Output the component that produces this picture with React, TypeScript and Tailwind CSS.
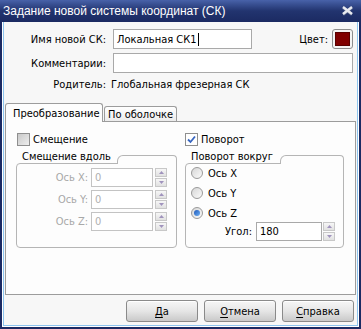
import React from 'react';

const ui = "font-['DejaVu_Sans_Condensed','Liberation_Sans',sans-serif] text-[11px] leading-none";

function TextBox({
  value,
  className,
  disabled,
  caret,
}: {
  value?: string;
  className?: string;
  disabled?: boolean;
  caret?: boolean;
}) {
  return (
    <div
      className={`flex items-center bg-white border px-[3px] ${
        disabled ? 'border-[#c3c3c3] text-[#b0b0b0]' : 'border-[#a9a9a9] text-black'
      } ${className ?? ''}`}
    >
      {value}
      {caret && <span className="ml-px w-px h-[13px] bg-black" />}
    </div>
  );
}

function Spinner() {
  return (
    <div className="flex flex-col gap-px w-[12px] h-[19px]">
      <div className="flex-1 flex items-center justify-center border border-[#c8c8c8] bg-gradient-to-b from-[#f7f7f7] to-[#e1e1e1]">
        <svg width="5" height="3" viewBox="0 0 5 3">
          <path d="M0 3 2.5 0 5 3Z" fill="#a093bd" />
        </svg>
      </div>
      <div className="flex-1 flex items-center justify-center border border-[#c8c8c8] bg-gradient-to-b from-[#f7f7f7] to-[#e1e1e1]">
        <svg width="5" height="3" viewBox="0 0 5 3">
          <path d="M0 0 2.5 3 5 0Z" fill="#a093bd" />
        </svg>
      </div>
    </div>
  );
}

function CheckBox({ checked, label }: { checked?: boolean; label: string }) {
  return (
    <div className="flex items-center h-[13px]">
      <div
        className={`w-[13px] h-[13px] border border-[#8f8f8f] flex items-center justify-center ${
          checked ? 'bg-white' : 'bg-gradient-to-br from-[#c9c9c9] to-[#eeeeee]'
        }`}
      >
        {checked && (
          <svg width="9" height="9" viewBox="0 0 9 9">
            <path d="M1 4.5 3.5 7 8 1.5" fill="none" stroke="#3765c0" strokeWidth="1.8" />
          </svg>
        )}
      </div>
      <span className="ml-[3px]">{label}</span>
    </div>
  );
}

function Radio({ checked, label }: { checked?: boolean; label: string }) {
  return (
    <div className="flex items-center h-[16px]">
      <div className="w-[12px] h-[12px] rounded-full border border-[#9a9a9a] bg-gradient-to-br from-[#d6d6d6] to-[#fbfbfb] flex items-center justify-center">
        {checked && (
          <div className="w-[6px] h-[6px] rounded-full bg-gradient-to-br from-[#1d57b8] to-[#6eb0f5]" />
        )}
      </div>
      <span className="ml-[5px]">{label}</span>
    </div>
  );
}

function GroupBox({
  title,
  titleWidth,
  width,
  children,
}: {
  title: string;
  titleWidth: string;
  width: string;
  children: React.ReactNode;
}) {
  return (
    <div className={`flex flex-col ${width}`}>
      <div className="flex items-end h-[12px]">
        <span className={`${titleWidth} h-[12px] leading-[12px] pl-[6px]`}>{title}</span>
        <div className="flex-1 h-[9px] -mb-px relative z-10 border-t border-x border-[#b5b5b5] rounded-tl-[6px] rounded-tr-[4px] bg-[#fdfdfd]" />
      </div>
      <div className="h-[85px] border border-[#b5b5b5] rounded-[4px] rounded-tr-none">{children}</div>
    </div>
  );
}

function DlgButton({ hot, rest }: { hot: string; rest: string }) {
  return (
    <div className="w-[72px] h-[22px] rounded-[3px] border border-[#8a8a8a] bg-gradient-to-b from-[#f6f6f6] via-[#e6e6e6] to-[#c9c9c9] flex items-center justify-center shadow-[inset_0_1px_0_#ffffff]">
      <span>
        <span className="underline underline-offset-2">{hot}</span>
        {rest}
      </span>
    </div>
  );
}

export default function App() {
  return (
    <div className={`${ui} w-[361px] h-[329px] bg-[#1b2a63] flex flex-col`}>
      <div className="h-[22px] flex items-center justify-between pl-[3px] pr-[7px] bg-gradient-to-b from-[#4862a9] via-[#22346f] to-[#1b2a62]">
        <span className="text-white text-[12px] font-['Liberation_Sans',sans-serif]">
          Задание новой системы координат (СК)
        </span>
        <svg width="13" height="10" viewBox="0 0 13 10">
          <path d="M2 1.5 11 8.5M11 1.5 2 8.5" stroke="#5a6789" strokeWidth="3" />
          <path d="M2 1 11 8M11 1 2 8" stroke="#e8eaf0" strokeWidth="2.4" />
        </svg>
      </div>

      <div className="flex-1 flex flex-col px-[2px] pb-[2px]">
        <div className="flex-1 flex flex-col border-x border-b border-white">
          <div className="flex-1 flex flex-col border-x border-b border-[#8cc4ef] bg-[#f7f7f7] px-px">
            {/* name row */}
            <div className="mt-[7px] flex items-center h-[20px]">
              <span className="w-[101px] text-right">Имя новой СК:</span>
              <TextBox value="Локальная СК1" caret className="ml-[7px] w-[139px] h-[20px]" />
              <span className="ml-auto">Цвет:</span>
              <div className="ml-[4px] mr-[3px] w-[21px] h-[20px] rounded-[3px] border border-[#8d8d8d] bg-[#f4f4f4] p-[2px]">
                <div className="w-full h-full bg-[#800000] border border-[#5a0000]" />
              </div>
            </div>

            {/* comments row */}
            <div className="mt-[4px] flex items-center h-[20px]">
              <span className="w-[101px] text-right">Комментарии:</span>
              <TextBox className="ml-[7px] w-[240px] h-[20px]" />
            </div>

            {/* parent row */}
            <div className="mt-[4px] flex items-center h-[14px]">
              <span className="w-[101px] text-right">Родитель:</span>
              <span className="ml-[5px]">Глобальная фрезерная СК</span>
            </div>

            {/* tabs */}
            <div className="mt-[12px] flex items-end h-[18px]">
              <div className="relative z-10 -mb-px w-[98px] h-[19px] border-t border-x border-[#9c9c9c] rounded-t-[3px] bg-[#fdfdfd] flex items-center pl-[7px]">
                Преобразование
              </div>
              <div className="ml-px w-[73px] h-[15px] border-t border-x border-[#9c9c9c] rounded-t-[3px] bg-gradient-to-b from-[#ffffff] to-[#ececec] flex items-center pl-[3px]">
                По оболочке
              </div>
            </div>

            {/* tab page */}
            <div className="h-[174px] border border-[#9c9c9c] bg-[#fdfdfd] pl-[10px] pt-[11px] flex gap-[8px]">
              <div className="flex flex-col w-[161px]">
                <div className="pl-px">
                  <CheckBox label="Смещение" />
                </div>
                <div className="mt-[5px]">
                  <GroupBox title="Смещение вдоль" titleWidth="w-[101px]" width="w-[161px]">
                    <div className="flex flex-col gap-[3px] pt-[4px] text-[#a8a8a8]">
                      {['Ось X:', 'Ось Y:', 'Ось Z:'].map((axis) => (
                        <div key={axis} className="flex items-center h-[19px]">
                          <span className="w-[71px] text-right">{axis}</span>
                          <TextBox value="0" disabled className="ml-[3px] w-[62px] h-[19px]" />
                          <div className="ml-[2px]">
                            <Spinner />
                          </div>
                        </div>
                      ))}
                    </div>
                  </GroupBox>
                </div>
              </div>

              <div className="flex flex-col w-[159px]">
                <CheckBox checked label="Поворот" />
                <div className="mt-[5px]">
                  <GroupBox title="Поворот вокруг" titleWidth="w-[95px]" width="w-[159px]">
                    <div className="flex flex-col pt-px pl-[5px]">
                      <div className="flex flex-col gap-[4px]">
                        <Radio label="Ось X" />
                        <Radio label="Ось Y" />
                        <Radio checked label="Ось Z" />
                      </div>
                      <div className="mt-px flex items-center h-[19px]">
                        <span className="w-[61px] text-right">Угол:</span>
                        <TextBox value="180" className="ml-[4px] w-[66px] h-[19px]" />
                        <div className="ml-px">
                          <Spinner />
                        </div>
                      </div>
                    </div>
                  </GroupBox>
                </div>
              </div>
            </div>

            {/* buttons */}
            <div className="mt-[5px] flex justify-end gap-[6px] pr-[2px]">
              <DlgButton hot="Д" rest="а" />
              <DlgButton hot="О" rest="тмена" />
              <DlgButton hot="С" rest="правка" />
            </div>
          </div>
        </div>
      </div>
    </div>
  );
}
